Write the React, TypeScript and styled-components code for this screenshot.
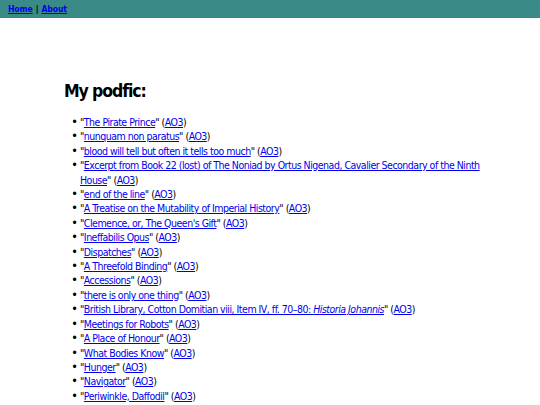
import React from "react";
import styled, { createGlobalStyle } from "styled-components";

const Global = createGlobalStyle`
  html, body { margin: 0; padding: 0; background: #fff; }
  body { font-family: "DejaVu Sans Condensed", "DejaVu Sans", sans-serif; color: #000; }
`;

const NavBar = styled.nav`
  background: #3a8a88;
  height: 18px;
  padding: 0 8px;
  display: flex;
  align-items: center;
  font-size: 8.6px;
  font-weight: bold;
  letter-spacing: -0.1px;
`;

const NavLink = styled.a`
  color: #0000ee;
  text-decoration: underline;
`;

const Sep = styled.span`
  margin: 0 3px;
`;

const Main = styled.main`
  padding: 63px 0 0 64px;
  width: 436px;
`;

const Heading = styled.h1`
  font-size: 17.5px;
  line-height: 20px;
  letter-spacing: -1.1px;
  font-weight: bold;
  margin: 0 0 14px;
`;

const List = styled.ul`
  margin: 0;
  padding-left: 16px;
  font-size: 10.5px;
  letter-spacing: -0.5px;
  line-height: 14.4px;
`;

const Item = styled.li`
  &::marker {
    content: "•\\200A\\200A";
    font-size: 12.5px;
    letter-spacing: 0;
  }
`;

const Link = styled.a`
  color: #0000ee;
  text-decoration: underline;
`;

type Fic = { title: React.ReactNode };

const fics: Fic[] = [
  { title: "The Pirate Prince" },
  { title: "nunquam non paratus" },
  { title: "blood will tell but often it tells too much" },
  { title: "Excerpt from Book 22 (lost) of The Noniad by Ortus Nigenad, Cavalier Secondary of the Ninth House" },
  { title: "end of the line" },
  { title: "A Treatise on the Mutability of Imperial History" },
  { title: "Clemence, or, The Queen's Gift" },
  { title: "Ineffabilis Opus" },
  { title: "Dispatches" },
  { title: "A Threefold Binding" },
  { title: "Accessions" },
  { title: "there is only one thing" },
  {
    title: (
      <>
        British Library, Cotton Domitian viii, Item IV, ff. 70–80: <i>Historia Johannis</i>
      </>
    ),
  },
  { title: "Meetings for Robots" },
  { title: "A Place of Honour" },
  { title: "What Bodies Know" },
  { title: "Hunger" },
  { title: "Navigator" },
  { title: "Periwinkle, Daffodil" },
];

export default function App() {
  return (
    <>
      <Global />
      <NavBar>
        <NavLink href="#">Home</NavLink>
        <Sep>|</Sep>
        <NavLink href="#">About</NavLink>
      </NavBar>
      <Main>
        <Heading>My podfic:</Heading>
        <List>
          {fics.map((f, i) => (
            <Item key={i}>
              "<Link href="#">{f.title}</Link>" (<Link href="#">AO3</Link>)
            </Item>
          ))}
        </List>
      </Main>
    </>
  );
}
